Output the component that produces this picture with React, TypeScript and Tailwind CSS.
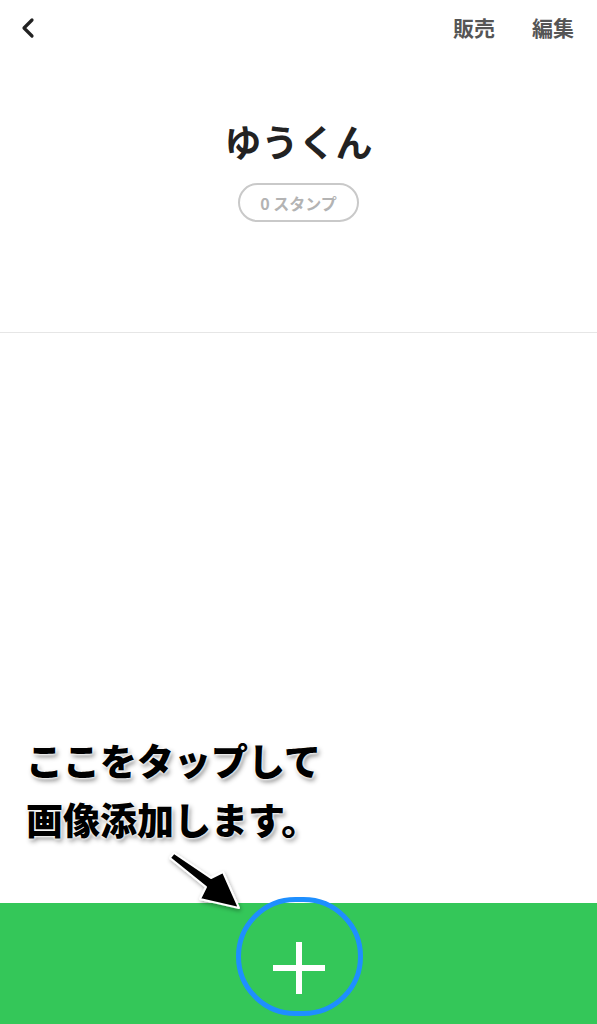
import { ChevronLeft } from "lucide-react";

const jp = "font-['Noto_Sans_CJK_JP','Noto_Sans',sans-serif]";

export default function App() {
  return (
    <div className={`relative flex h-[1024px] w-full flex-col overflow-hidden bg-white ${jp}`}>
      {/* header */}
      <header className="flex h-[56px] items-center justify-between pl-[12px] pr-[23px]">
        <ChevronLeft className="h-[32px] w-[32px] text-[#222]" strokeWidth={2.4} />
        <div className="flex items-center gap-[37px] text-[21px] font-bold text-[#555]">
          <span>販売</span>
          <span>編集</span>
        </div>
      </header>

      {/* title */}
      <div className="flex flex-col items-center border-b border-[#e6e6e6] pb-[110px] pt-[62px]">
        <h1 className="text-[37px] font-bold leading-[46px] text-[#222]">ゆうくん</h1>
        <div className="mt-[19px] flex h-[39px] w-[121px] items-center justify-center rounded-full border-2 border-[#c9c9c9] text-[16px] font-bold text-[#b3b3b3]">
          0 スタンプ
        </div>
      </div>

      <div className="flex-1 bg-white" />

      {/* add bar */}
      <div className="flex h-[121px] items-center justify-center bg-[#34c759] pt-[8px]">
        <svg width="54" height="54" viewBox="0 0 54 54">
          <path d="M27 1v52M1 27h52" stroke="#fff" strokeWidth="6" />
        </svg>
      </div>

      {/* annotation overlay */}
      <div className="absolute left-[26px] top-[731px] text-[37px] font-black leading-[59px] text-black [text-shadow:0_0_3px_#fff,0_0_3px_#fff,0_0_3px_#fff,2px_3px_5px_rgba(0,0,0,0.45)]">
        <div>ここをタップして</div>
        <div>画像添加します。</div>
      </div>

      <svg className="absolute left-0 top-0" width="597" height="1024" viewBox="0 0 597 1024">
        <defs>
          <filter id="sh" x="-20%" y="-20%" width="140%" height="140%">
            <feDropShadow dx="1" dy="2" stdDeviation="2" floodColor="#000" floodOpacity="0.35" />
          </filter>
        </defs>
        <path
          d="M170 858 L174 853 L211 878 L223 872 L239 908 L200 899 L206 887 Z"
          fill="#000"
          stroke="#fff"
          strokeWidth="2"
          strokeLinejoin="round"
          filter="url(#sh)"
        />
      </svg>

      <div className="absolute left-[236px] top-[897px] h-[119px] w-[127px] rounded-full border-[5px] border-[#1e8fff]" />
    </div>
  );
}
